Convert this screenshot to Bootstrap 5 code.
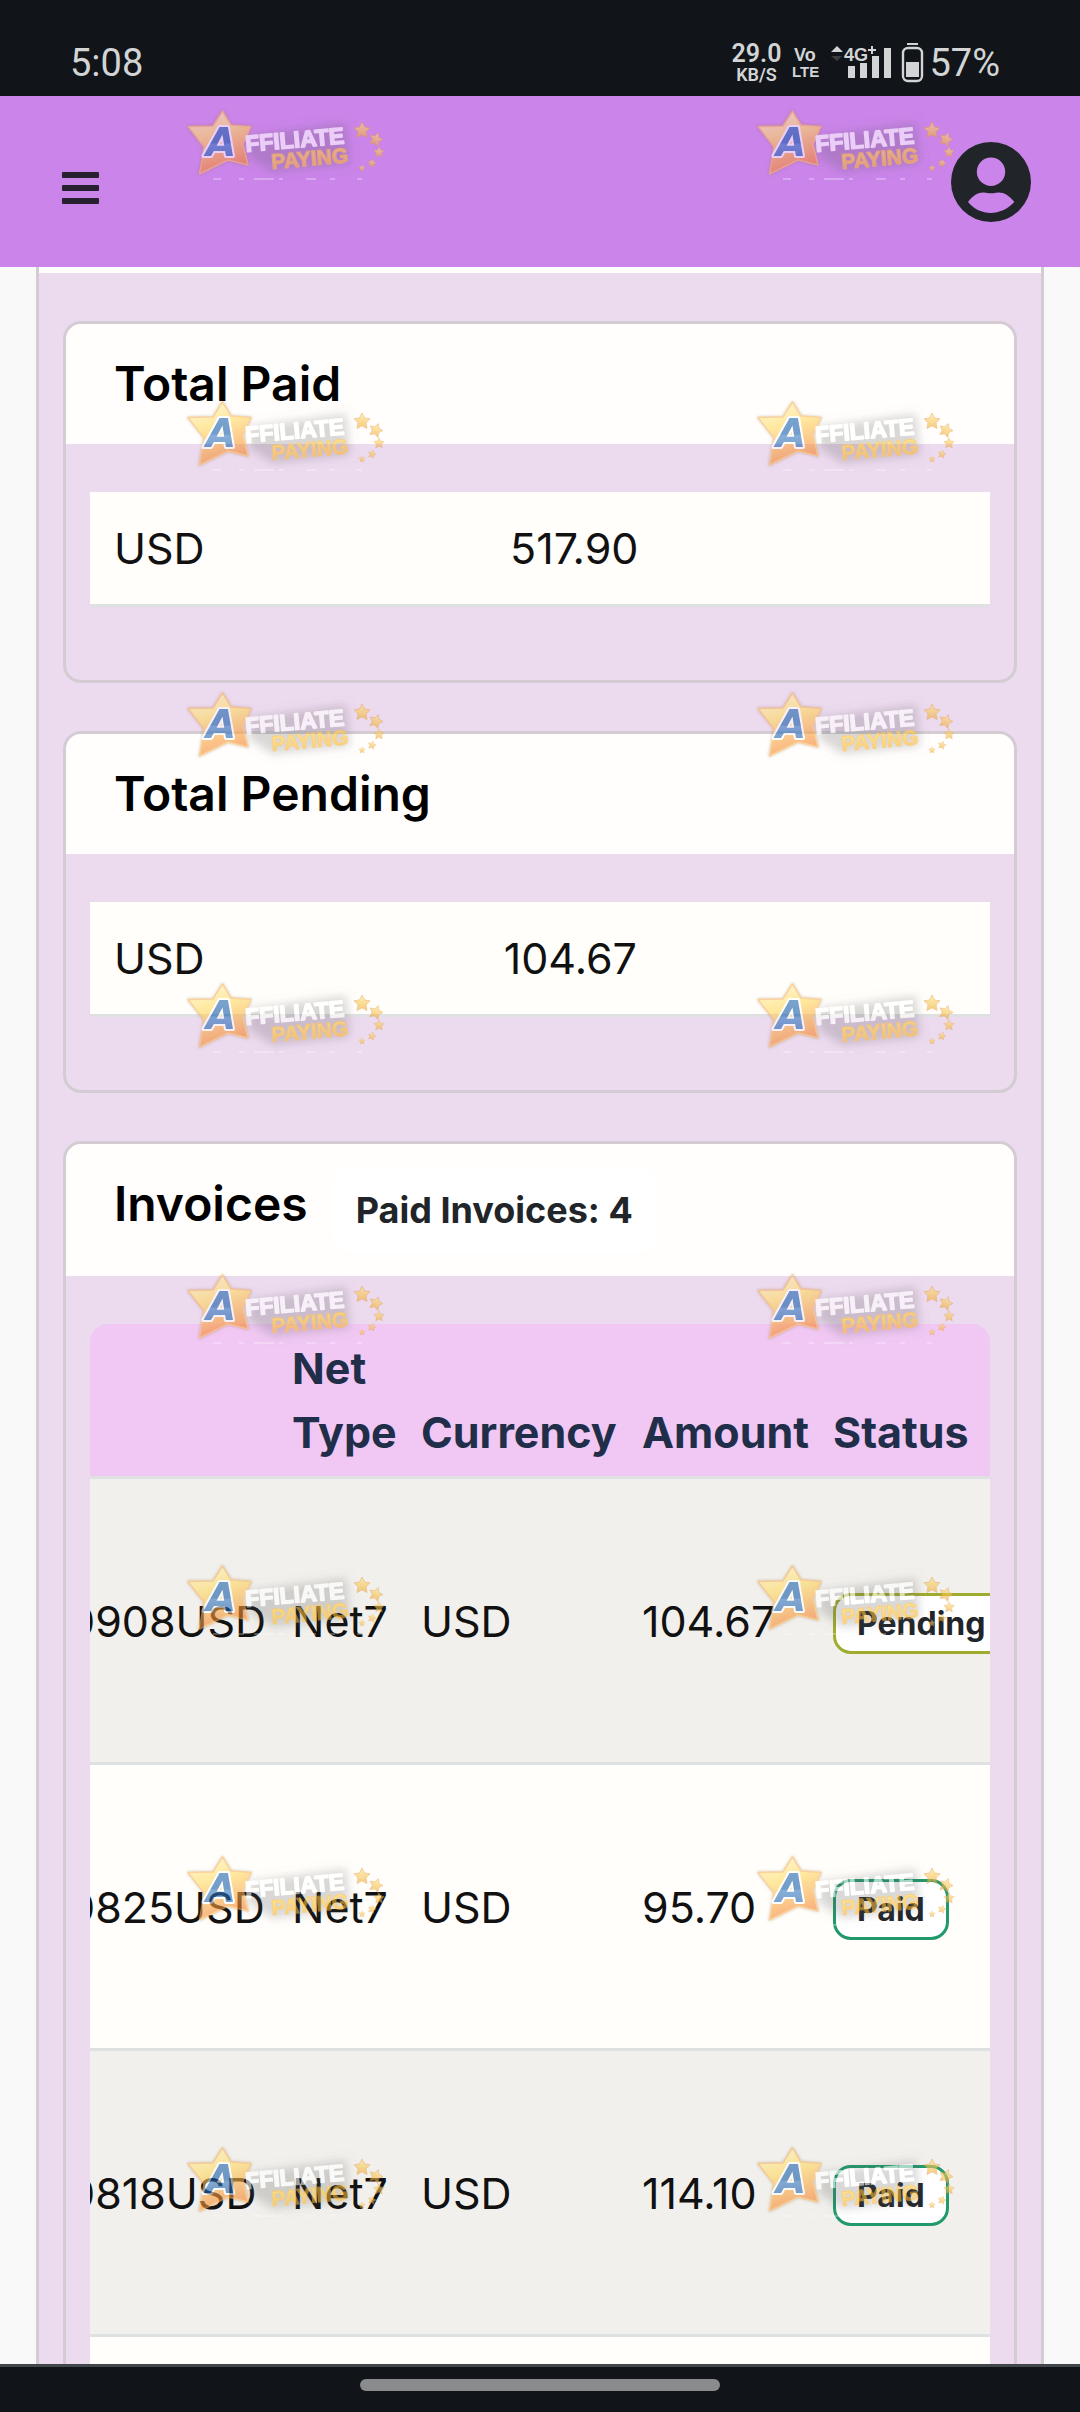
<!DOCTYPE html>
<html lang="en">
<head>
<meta charset="utf-8">
<meta name="viewport" content="width=device-width, initial-scale=1">
<title>Payments</title>
<link href="https://cdn.jsdelivr.net/npm/bootstrap@5.3.0/dist/css/bootstrap.min.css" rel="stylesheet">
<style>
  body { font-family: Inter, "Liberation Sans", sans-serif; font-size: 43px; line-height: 64px; color: #111; background: #f9f9f9; }
  .phone-bar { height: 96px; padding: 0 80px 0 70px; background: #111418; color: #d2d4d5; font-family: Roboto, sans-serif; }
  .phone-bar .clock { font-size: 38px; line-height: 44px; margin-top: 41px; }
  .phone-bar .status-set { margin-top: 41px; }
  .net-speed { font-size: 25px; line-height: 24px; font-weight: 600; margin: 1px 8px 0 0; }
  .net-speed span { font-size: 18px; line-height: 17px; }
  .pct { font-size: 38px; line-height: 44px; }
  .top-nav { height: 171px; padding: 0 49px 0 62px; background: #ca84ea; }
  .panel { margin: 0 36px; padding: 54px 24px 48px; gap: 48px; border: 3px solid #d3cdd3; border-width: 0 3px; background: #ecdaee; box-shadow: inset 0 6px #fff; }
  .money-card { border: 3px solid #d3cdd3; border-radius: 18px; background: transparent; flex: none; }
  .money-card .card-header { padding: 24px 48px; gap: 24px; border: 0; background: #fffefc; color: #000; border-radius: 15px 15px 0 0; }
  .money-card h2 { font-size: 48px; line-height: 72px; font-weight: 600; margin: 0; }
  .money-card .card-body { padding: 48px 24px 73px; }
  .table { --bs-table-bg: #fffefb; --bs-table-color: #111; --bs-table-striped-bg: #f1f0ec; --bs-table-striped-color: #111; margin: 0; color: #111; }
  .table > :not(caption) > * > * { border-bottom: 3px solid #dfe0e2; padding: 24px; }
  .count-pill { font-size: 36px; line-height: 36px; font-weight: 700; padding: 24px; border-radius: 18px; background: #fff; color: #212529; }
  .invoice-wrap { overflow: hidden; border-radius: 18px 18px 0 0; }
  /* table scrolled part of the way to the right */
  .invoices { table-layout: fixed; width: 990px; margin-left: -38px; }
  .invoices > :not(caption) > * > * { padding: 12px; vertical-align: middle; white-space: nowrap; }
  .invoices thead th { background: #f0c8f3; color: #212e49; font-weight: 700; white-space: normal; vertical-align: bottom; }
  .invoices tbody tr { height: 286px; }
  .invoices tbody td:first-child { padding-left: 16px; }
  .state-pill { font-size: 32px; line-height: 32px; font-weight: 700; padding: 12px 21px 11px; border: 3px solid #21996b; border-radius: 18px; background: #fff; color: #212529; vertical-align: baseline; }
  .state-pill.wait { border-color: #a0ac2d; }
  .home-bar { height: 48px; padding-top: 12px; background: #111418; border-top: 3px solid #42474c; }
  .home-bar span { width: 360px; height: 12px; border-radius: 6px; background: #8a8b8c; }
  .marks { left: 0; top: 96px; width: 100%; height: calc(100% - 144px); pointer-events: none; }
</style>
<script src="https://cdn.jsdelivr.net/npm/bootstrap@5.3.0/dist/js/bootstrap.bundle.min.js"></script>
</head>
<body>
<div class="vh-100 d-flex flex-column overflow-hidden position-relative">
  <div class="phone-bar d-flex justify-content-between align-items-start flex-shrink-0">
    <span class="clock">5:08</span>
    <div class="status-set d-flex align-items-start">
      <div class="net-speed text-center d-flex flex-column"><div>29.0</div><span>KB/S</span></div>
      <svg width="140" height="44" viewBox="790 40 140 44" fill="#d2d4d5" role="img" aria-label="VoLTE, 4G+ signal, battery">
        <g font-family="'Liberation Sans Narrow','Liberation Sans',sans-serif" font-weight="700">
          <text x="795" y="60" font-size="18">Vo</text>
          <text x="793" y="76" font-size="15">LTE</text>
          <text x="845" y="60" font-size="18">4G</text>
        </g>
        <path d="M832 51l6-6 6 6z"/>
        <path d="M873 45v8M869 49h8" stroke="#d2d4d5" stroke-width="2"/>
        <path d="M832 55h11l-5 5z" fill="#3b3e41"/>
        <path d="M849 65h7v12h-7zM861 62h7v15h-7zM873 55h7v22h-7zM885 47h7v30h-7z"/>
        <rect x="904" y="47" width="19" height="33" rx="5" fill="none" stroke="#d2d4d5" stroke-width="2.4"/>
        <path d="M908 42h11v2h-11zM907 61h13v15h-13z"/>
      </svg>
      <span class="pct">57%</span>
    </div>
  </div>

  <nav class="top-nav d-flex justify-content-between align-items-center flex-shrink-0">
    <button type="button" class="btn p-0 border-0 d-flex" aria-label="Menu">
      <svg width="38" height="46" viewBox="0 0 38 46" fill="#26202f"><rect y="13" width="37" height="6" rx="1"/><rect y="26" width="37" height="6" rx="1"/><rect y="39" width="37" height="6" rx="1"/></svg>
    </button>
    <a href="#" class="d-flex" aria-label="Account">
      <svg width="80" height="80" viewBox="0 0 80 80" fill="#212529"><path fill-rule="evenodd" d="M40 0a40 40 0 1 1 0 80a40 40 0 1 1 0-80zM40 15.500a14.200 14.200 0 1 0 0 28.400a14.200 14.200 0 1 0 0-28.400zM17 60C22 53 28 50 33 50.500C37 51.500 43 51.500 47 50.500C52 50 58 53 63.300 60C50 74.500 29 74.500 17 60z"/></svg>
    </a>
  </nav>

  <main class="flex-grow-1 overflow-hidden">
    <div class="panel d-flex flex-column">
      <section class="card money-card">
        <div class="card-header"><h2>Total Paid</h2></div>
        <div class="card-body">
          <table class="table totals"><colgroup><col style="width:44%"><col></colgroup><tbody><tr><td>USD</td><td>517.90</td></tr></tbody></table>
        </div>
      </section>
      <section class="card money-card">
        <div class="card-header"><h2>Total Pending</h2></div>
        <div class="card-body">
          <table class="table totals"><colgroup><col style="width:43.300%"><col></colgroup><tbody><tr><td>USD</td><td>104.67</td></tr></tbody></table>
        </div>
      </section>
      <section class="card money-card">
        <div class="card-header d-flex align-items-start"><h2>Invoices</h2><span class="badge count-pill">Paid Invoices: 4</span></div>
        <div class="card-body">
          <div class="invoice-wrap">
            <table class="table table-striped invoices">
              <colgroup><col style="width:228px"><col style="width:129px"><col style="width:221px"><col style="width:191px"><col></colgroup>
              <thead><tr><th></th><th>Net Type</th><th>Currency</th><th>Amount</th><th>Status</th></tr></thead>
              <tbody>
                <tr><td>0908USD</td><td>Net7</td><td>USD</td><td>104.67</td><td><span class="badge state-pill wait">Pending</span></td></tr>
                <tr><td>0825USD</td><td>Net7</td><td>USD</td><td>95.70</td><td><span class="badge state-pill">Paid</span></td></tr>
                <tr><td>0818USD</td><td>Net7</td><td>USD</td><td>114.10</td><td><span class="badge state-pill">Paid</span></td></tr>
                <tr><td></td><td></td><td></td><td></td><td></td></tr>
              </tbody>
            </table>
          </div>
        </div>
      </section>
    </div>
  </main>

  <div class="home-bar d-flex justify-content-center align-items-start flex-shrink-0"><span></span></div>

  <!-- repeating sponsor watermark over the page -->
  <svg class="marks position-absolute" aria-hidden="true">
    <defs>
      <linearGradient id="gold" x1="0" y1="0" x2="0.300" y2="1"><stop offset="0" stop-color="#fff6c8"/><stop offset=".45" stop-color="#ffd960"/><stop offset="1" stop-color="#f57f2a"/></linearGradient>
      <linearGradient id="coin" x1="0" y1="0" x2="0" y2="1"><stop offset="0" stop-color="#ffe680"/><stop offset="1" stop-color="#f0a82c"/></linearGradient>
      <linearGradient id="gilt" x1="0" y1="0" x2="0" y2="1"><stop offset="0" stop-color="#ffe04a"/><stop offset="1" stop-color="#f2a326"/></linearGradient>
      <linearGradient id="blue" x1="0" y1="0" x2="0" y2="1"><stop offset="0" stop-color="#2468b0"/><stop offset=".5" stop-color="#145aa8"/><stop offset=".55" stop-color="#3478c0"/><stop offset="1" stop-color="#1450a0"/></linearGradient>
      <filter id="soft" x="-20%" y="-40%" width="140%" height="180%"><feGaussianBlur stdDeviation="5"/></filter>
      <filter id="edge" x="-20%" y="-20%" width="140%" height="140%"><feGaussianBlur stdDeviation="1.500"/></filter>
      <path id="tiny" d="M0-8l2.500 5 5.500.8-4 4 1 5.700-5-2.700-5 2.700 1-5.700-4-4 5.500-.8z"/>
      <pattern id="tile" x="186" y="12" width="570" height="291" patternUnits="userSpaceOnUse">
        <g opacity=".6" stroke-linejoin="round">
          <path d="M62 28L160 15L164 56L86 64L62 48z" fill="#555" opacity=".38" filter="url(#soft)"/>
          <path d="M36.500 3L45 17L65 18.500L57 36L62 57L42 52L13.500 66L18 39L2 18.500L27 18z" fill="#8a5a30" stroke="#8a5a30" stroke-width="2" opacity=".5" filter="url(#edge)"/>
          <path d="M36.500 3L45 17L65 18.500L57 36L62 57L42 52L13.500 66L18 39L2 18.500L27 18z" fill="url(#gold)" stroke="#f7b45c" stroke-width="1.500"/>
          <g font-weight="700">
            <text x="20" y="48" font-size="39" font-family="'DejaVu Sans',sans-serif" font-style="italic" fill="url(#blue)" stroke="#fff" stroke-width="4" paint-order="stroke">A</text>
            <text transform="translate(60 44) rotate(-5)" font-size="23" font-family="'Liberation Sans',sans-serif" fill="#fff" stroke="#fff" stroke-width="1.500">FFILIATE</text>
            <text transform="translate(86 61) rotate(-5)" font-size="21" font-family="'Liberation Sans',sans-serif" fill="url(#gilt)" stroke="#f3b338" stroke-width="1.300">PAYING</text>
          </g>
          <g fill="url(#coin)" stroke="#e39a48" stroke-width=".8">
            <use href="#tiny" transform="translate(176 22)"/>
            <use href="#tiny" transform="translate(190 31) rotate(20) scale(.85)"/>
            <use href="#tiny" transform="translate(193 44) scale(.65)"/>
            <use href="#tiny" transform="translate(186 55) rotate(15) scale(.5)"/>
            <use href="#tiny" transform="translate(176 60) scale(.4)"/>
          </g>
          <path d="M27 71h8M53 71h5M68 71h20M93 71h4M120 71h10M144 71h5M171 71h5" stroke="#fff" stroke-width="1.500" opacity=".6"/>
        </g>
      </pattern>
    </defs>
    <rect width="100%" height="100%" fill="url(#tile)"/>
  </svg>
</div>
</body>
</html>
